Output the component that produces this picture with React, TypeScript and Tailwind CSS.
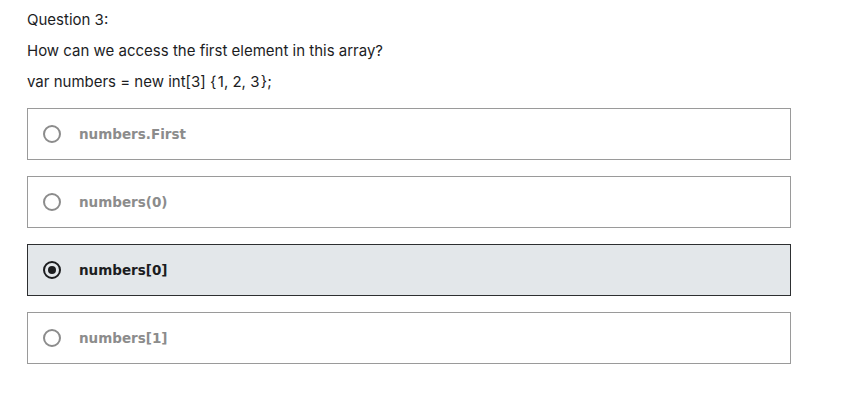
const options = [
  { id: "a", label: "numbers.First" },
  { id: "b", label: "numbers(0)" },
  { id: "c", label: "numbers[0]" },
  { id: "d", label: "numbers[1]" },
];

const selected = "c";

export default function App() {
  return (
    <div className="min-h-screen bg-white px-[27px] pt-[9px] font-['Inter',sans-serif] text-[#1c1d1f]">
      <div className="text-[15px] leading-[22px]">Question 3:</div>
      <p className="mt-[9px] text-[15px] leading-[22px]">
        How can we access the first element in this array?
      </p>
      <p className="mt-[9px] text-[15px] leading-[22px]">
        var numbers = new int[3] {"{"}&#8202;1, 2, 3&#8202;{"}"};
      </p>

      <div className="mt-[15px] flex w-[764px] flex-col gap-4">
        {options.map((opt) => {
          const active = opt.id === selected;
          return (
            <label
              key={opt.id}
              className={
                active
                  ? "flex h-[52px] items-center gap-[18px] border border-[#2d2f31] bg-[#e3e7ea] px-[15px]"
                  : "flex h-[52px] items-center gap-[18px] border border-[#9a9a9a] bg-white px-[15px]"
              }
            >
              <span
                className={
                  active
                    ? "flex h-[18px] w-[18px] items-center justify-center rounded-full border-2 border-[#1c1d1f]"
                    : "flex h-[18px] w-[18px] items-center justify-center rounded-full border-2 border-[#8c8c8c]"
                }
              >
                {active && <span className="h-2 w-2 rounded-full bg-[#1c1d1f]" />}
              </span>
              <span
                className={
                  active
                    ? "font-['DejaVu_Sans',sans-serif] text-[13.5px] font-bold text-[#1c1d1f]"
                    : "font-['DejaVu_Sans',sans-serif] text-[13.5px] font-bold text-[#8c8c8c]"
                }
              >
                {opt.label}
              </span>
            </label>
          );
        })}
      </div>
    </div>
  );
}
